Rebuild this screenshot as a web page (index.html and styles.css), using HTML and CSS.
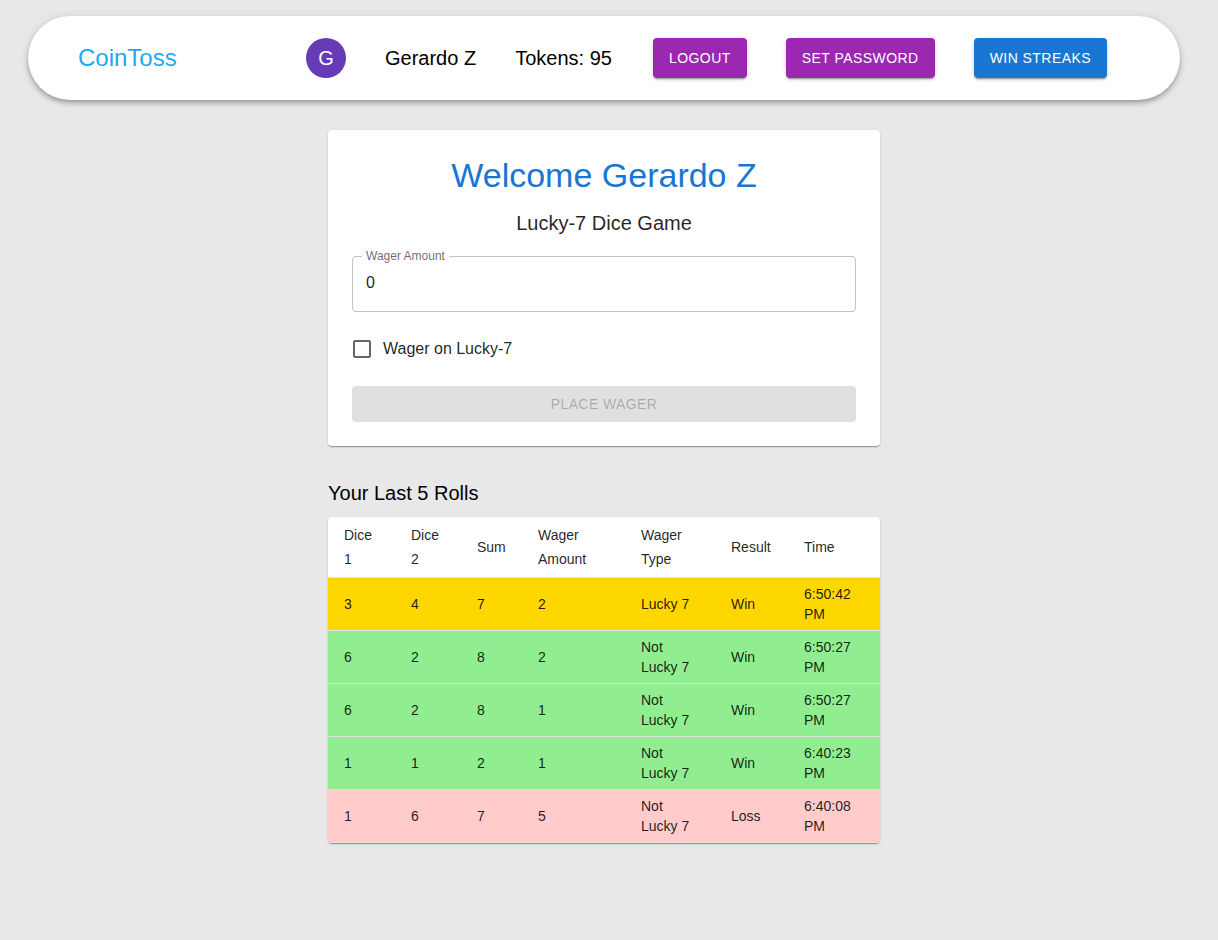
FILE: index.html
```html
<!DOCTYPE html>
<html lang="en">
<head>
<meta charset="utf-8">
<title>CoinToss</title>
<link rel="stylesheet" href="styles.css">
</head>
<body>
<div class="page">
  <header class="topbar">
    <div class="brand">CoinToss</div>
    <div class="nav">
      <div class="avatar">G</div>
      <span class="nav-text">Gerardo Z</span>
      <span class="nav-text tokens">Tokens: 95</span>
      <button class="btn btn-purple">Logout</button>
      <button class="btn btn-purple">Set Password</button>
      <button class="btn btn-blue">Win Streaks</button>
    </div>
  </header>

  <main class="main">
    <section class="card">
      <h1 class="welcome">Welcome Gerardo Z</h1>
      <h2 class="subtitle">Lucky-7 Dice Game</h2>
      <fieldset class="field">
        <legend class="field-label">Wager Amount</legend>
        <input class="field-input" type="text" value="0">
      </fieldset>
      <label class="check-row">
        <span class="check-box"></span>
        <span class="check-label">Wager on Lucky-7</span>
      </label>
      <button class="btn-wager" disabled>Place Wager</button>
    </section>

    <h3 class="rolls-title">Your Last 5 Rolls</h3>
    <div class="table-wrap">
      <table class="rolls">
        <thead>
          <tr>
            <th>Dice 1</th><th>Dice 2</th><th>Sum</th><th>Wager Amount</th><th>Wager Type</th><th>Result</th><th>Time</th>
          </tr>
        </thead>
        <tbody>
          <tr class="row-lucky">
            <td>3</td><td>4</td><td>7</td><td>2</td><td>Lucky 7</td><td>Win</td><td>6:50:42 PM</td>
          </tr>
          <tr class="row-win">
            <td>6</td><td>2</td><td>8</td><td>2</td><td>Not Lucky 7</td><td>Win</td><td>6:50:27 PM</td>
          </tr>
          <tr class="row-win">
            <td>6</td><td>2</td><td>8</td><td>1</td><td>Not Lucky 7</td><td>Win</td><td>6:50:27 PM</td>
          </tr>
          <tr class="row-win">
            <td>1</td><td>1</td><td>2</td><td>1</td><td>Not Lucky 7</td><td>Win</td><td>6:40:23 PM</td>
          </tr>
          <tr class="row-loss">
            <td>1</td><td>6</td><td>7</td><td>5</td><td>Not Lucky 7</td><td>Loss</td><td>6:40:08 PM</td>
          </tr>
        </tbody>
      </table>
    </div>
  </main>
</div>
</body>
</html>
```

FILE: styles.css
```css
* { box-sizing: border-box; }

html, body {
  margin: 0;
  padding: 0;
  background: #e8e8e8;
  font-family: "Liberation Sans", Arial, Helvetica, sans-serif;
  color: rgba(0, 0, 0, 0.87);
}

.page {
  width: 1208px;
  min-height: 940px;
}

/* ---------- top bar ---------- */
.topbar {
  margin: 16px 28px 0 28px;
  height: 84px;
  background: #fff;
  border-radius: 42px;
  display: flex;
  align-items: center;
  padding-left: 50px;
  box-shadow: 0 2px 4px -1px rgba(0,0,0,0.2), 0 4px 5px 0 rgba(0,0,0,0.14), 0 1px 10px 0 rgba(0,0,0,0.12);
}

.brand {
  width: 228px;
  font-size: 24px;
  color: #1eaaf1;
  line-height: 1;
}

.nav {
  display: flex;
  align-items: center;
  gap: 39px;
}

.avatar {
  width: 40px;
  height: 40px;
  border-radius: 50%;
  background: #673ab7;
  color: #fff;
  font-size: 20px;
  display: flex;
  align-items: center;
  justify-content: center;
}

.nav-text {
  font-size: 20px;
  color: #000;
}

.tokens {
  margin-right: 2px;
}

.btn {
  height: 40px;
  padding: 0 16px;
  border: 0;
  border-radius: 4px;
  color: #fff;
  font-family: inherit;
  font-size: 14px;
  font-weight: 500;
  letter-spacing: 0.45px;
  text-transform: uppercase;
  box-shadow: 0 3px 1px -2px rgba(0,0,0,0.2), 0 2px 2px 0 rgba(0,0,0,0.14), 0 1px 5px 0 rgba(0,0,0,0.12);
  cursor: pointer;
}

.btn-purple { background: #9c27b0; }
.btn-blue { background: #1976d2; }

/* ---------- main ---------- */
.main {
  width: 552px;
  margin: 30px auto 0 auto;
}

.card {
  background: #fff;
  border-radius: 4px;
  padding: 24px;
  display: flex;
  flex-direction: column;
  box-shadow: 0 2px 1px -1px rgba(0,0,0,0.2), 0 1px 1px 0 rgba(0,0,0,0.14), 0 1px 3px 0 rgba(0,0,0,0.12);
}

.welcome {
  margin: 0 0 11px 0;
  font-size: 34px;
  font-weight: 400;
  line-height: 42px;
  color: #1976d2;
  text-align: center;
}

.subtitle {
  margin: 0 0 11px 0;
  font-size: 20px;
  font-weight: 400;
  line-height: 32px;
  text-align: center;
  color: rgba(0, 0, 0, 0.87);
}

.field {
  margin: 0;
  padding: 0 13px 9px 13px;
  border: 1px solid #c4c4c4;
  border-radius: 4px;
  min-width: 0;
}

.field-label {
  font-size: 12px;
  line-height: 12px;
  padding: 0 4px;
  margin-left: -4px;
  color: rgba(0, 0, 0, 0.6);
}

.field-input {
  display: block;
  width: 100%;
  height: 40px;
  border: 0;
  outline: none;
  padding: 1px 0 0 0;
  font-family: inherit;
  font-size: 16px;
  color: rgba(0, 0, 0, 0.87);
  background: transparent;
}

.check-row {
  margin-top: 16px;
  height: 42px;
  display: flex;
  align-items: center;
  padding-left: 1px;
}

.check-box {
  width: 18px;
  height: 18px;
  border: 2px solid rgba(0, 0, 0, 0.6);
  border-radius: 2px;
  margin-right: 12px;
}

.check-label {
  font-size: 16px;
}

.btn-wager {
  margin-top: 16px;
  height: 36px;
  border: 0;
  border-radius: 4px;
  background: #e0e0e0;
  color: rgba(0, 0, 0, 0.26);
  font-family: inherit;
  font-size: 14px;
  font-weight: 500;
  letter-spacing: 0.4px;
  text-transform: uppercase;
}

/* ---------- rolls ---------- */
.rolls-title {
  margin: 35px 0 12px 0;
  font-size: 20px;
  font-weight: 400;
  line-height: 24px;
  color: #000;
}

.table-wrap {
  background: #fff;
  border-radius: 4px;
  overflow: hidden;
  box-shadow: 0 2px 1px -1px rgba(0,0,0,0.2), 0 1px 1px 0 rgba(0,0,0,0.14), 0 1px 3px 0 rgba(0,0,0,0.12);
}

.rolls {
  width: 100%;
  border-collapse: collapse;
  table-layout: fixed;
  font-size: 14px;
}

.rolls th,
.rolls td {
  padding: 6px 16px;
  text-align: left;
  vertical-align: middle;
  border-bottom: 1px solid #e0e0e0;
}

.rolls th {
  font-weight: 400;
  line-height: 24px;
  color: rgba(0, 0, 0, 0.87);
}

.rolls td {
  line-height: 20px;
  color: rgba(0, 0, 0, 0.87);
}

.rolls th:nth-child(1) { width: 67px; }
.rolls th:nth-child(2) { width: 66px; }
.rolls th:nth-child(3) { width: 61px; }
.rolls th:nth-child(4) { width: 103px; }
.rolls th:nth-child(5) { width: 90px; }
.rolls th:nth-child(6) { width: 73px; }
.rolls th:nth-child(7) { width: 92px; }

.row-lucky { background: #ffd700; }
.row-win { background: #90ee90; }
.row-loss { background: #ffcccb; }
```
